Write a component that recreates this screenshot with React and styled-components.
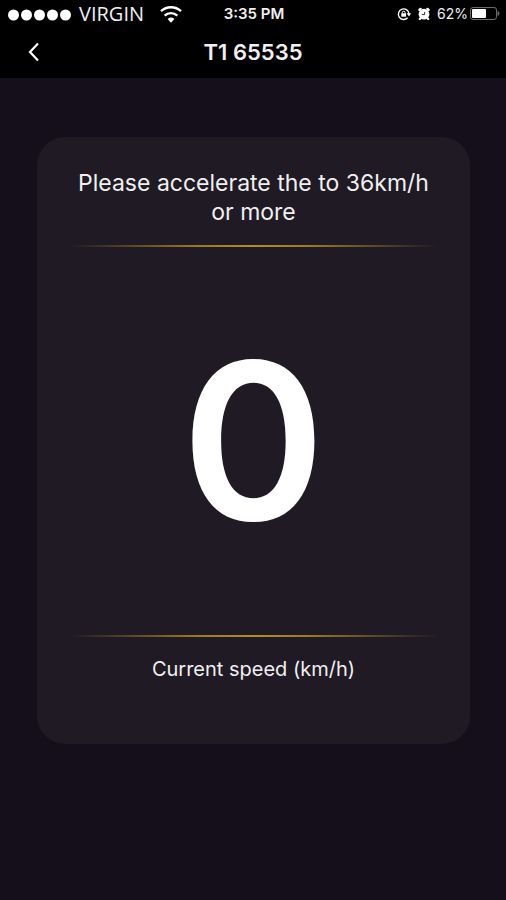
import React, { useState } from "react";
import styled, { createGlobalStyle } from "styled-components";

const GlobalStyle = createGlobalStyle`
  * {
    box-sizing: border-box;
  }
  body {
    margin: 0;
    background: #150f1b;
    color: #f1eff2;
    font-family: Inter, "Liberation Sans", sans-serif;
  }
`;

const Page = styled.div`
  min-height: 100vh;
  display: flex;
  flex-direction: column;
`;

const Header = styled.header`
  background: #000;
`;

const StatusBar = styled.div`
  display: grid;
  grid-template-columns: 1fr auto 1fr;
  align-items: center;
  height: 28px;
  padding: 0 6px 0 8px;
`;

const StatusGroup = styled.div`
  display: flex;
  align-items: center;
  justify-content: ${(props) => props.$align || "flex-start"};
`;

const Signal = styled.svg`
  width: 63px;
  height: 14px;
  margin-right: 8px;
  fill: #fff;
`;

const Carrier = styled.span`
  font-family: "Open Sans", "Noto Sans", sans-serif;
  font-size: 20px;
  line-height: 28px;
  margin-right: 16px;
`;

const StatusText = styled.span`
  font-size: ${(props) => (props.$strong ? 15 : 14)}px;
  font-weight: ${(props) => (props.$strong ? 600 : 400)};
  line-height: 28px;
`;

const StatusIcon = styled.svg`
  width: 14px;
  height: 14px;
  margin-right: 6px;
`;

const WifiIcon = styled.svg`
  width: 22px;
  height: 18px;
`;

const BatteryIcon = styled.svg`
  width: 30px;
  height: 14px;
  margin-left: 2px;
`;

const NavBar = styled.nav`
  display: grid;
  grid-template-columns: 68px 1fr 68px;
  align-items: center;
  height: 50px;
  padding-bottom: 2px;
`;

const BackButton = styled.button`
  display: flex;
  align-items: center;
  justify-content: center;
  height: 44px;
  padding: 0;
  border: 0;
  background: none;
  color: #fff;
  cursor: pointer;
`;

const Title = styled.h1`
  margin: 0;
  font-size: 22px;
  font-weight: 600;
  line-height: 28px;
  text-align: center;
`;

const Main = styled.main`
  padding: 59px 36px 59px 37px;
`;

const Card = styled.section`
  display: flex;
  flex-direction: column;
  padding: 32px 32px 60px;
  border-radius: 28px;
  background: #1f1a23;
  text-align: center;
`;

const Message = styled.p`
  margin: 0 0 18px;
  font-size: 23px;
  line-height: 29px;
`;

const Divider = styled.hr`
  width: 100%;
  height: 2px;
  margin: 0;
  border: 0;
  background: linear-gradient(
    to right,
    transparent,
    #9c7a25 35%,
    #b38d2c 50%,
    #9c7a25 65%,
    transparent
  );
`;

const Speed = styled.output`
  padding: 64px 0;
  color: #fff;
  font-size: 218px;
  font-weight: 600;
  line-height: 260px;
`;

const Caption = styled.p`
  margin: 18px 0 0;
  font-size: 20px;
  line-height: 29px;
`;

function SignalDots() {
  return (
    <Signal viewBox="0 0 63 14" aria-hidden="true">
      {[5.5, 18.5, 31.5, 44.5, 57.5].map((x) => (
        <circle key={x} cx={x} cy="8" r="5.5" />
      ))}
    </Signal>
  );
}

function Wifi() {
  return (
    <WifiIcon viewBox="0 0 22 18" fill="none" stroke="#fff" aria-hidden="true">
      <path d="M1 6.2a14.5 14.5 0 0 1 20 0" strokeWidth="2.4" />
      <path d="M4.7 10.6a9.2 9.2 0 0 1 12.6 0" strokeWidth="2.4" />
      <path d="M11 17.8 7.6 14a5.2 5.2 0 0 1 6.8 0z" fill="#fff" stroke="none" />
    </WifiIcon>
  );
}

function RotationLock() {
  return (
    <StatusIcon viewBox="0 0 14 14" fill="none" stroke="#fff" aria-hidden="true">
      <path d="M10.6 10.8A5.3 5.3 0 1 1 12 7" strokeWidth="1.4" />
      <path d="m9.6 6.2 2.4 3.2L14 6.2z" fill="#fff" stroke="none" />
      <path d="M5.3 6.8V5.6a1.4 1.4 0 0 1 2.8 0v1.2" />
      <path d="M4.3 6.3h4.8v3.4H4.3z" fill="#fff" stroke="none" />
    </StatusIcon>
  );
}

function Alarm() {
  return (
    <StatusIcon viewBox="0 0 14 14" aria-hidden="true">
      <g stroke="#fff" strokeWidth="2.4" strokeLinecap="round">
        <path d="M2.4 3 3.6 1.9M11.6 3l-1.2-1.1M2.8 12l1-1M11.2 12l-1-1" />
      </g>
      <circle cx="7" cy="7.2" r="5.4" fill="#fff" />
      <path d="M7.6 5v2.6H4.8" fill="none" stroke="#333" />
    </StatusIcon>
  );
}

function Battery() {
  return (
    <BatteryIcon viewBox="0 0 30 14" aria-hidden="true">
      <rect
        x="0.5"
        y="0.5"
        width="26"
        height="12"
        rx="2.5"
        fill="none"
        stroke="#6c6c6c"
      />
      <path d="M27.5 4c2.6.8 2.6 4.2 0 5z" fill="#6c6c6c" />
      <rect x="2" y="2" width="14" height="9" rx="1" fill="#fff" />
    </BatteryIcon>
  );
}

export default function App() {
  const [speed] = useState(0);

  return (
    <Page>
      <GlobalStyle />
      <Header>
        <StatusBar>
          <StatusGroup>
            <SignalDots />
            <Carrier>VIRGIN</Carrier>
            <Wifi />
          </StatusGroup>
          <StatusText $strong>3:35 PM</StatusText>
          <StatusGroup $align="flex-end">
            <RotationLock />
            <Alarm />
            <StatusText>62%</StatusText>
            <Battery />
          </StatusGroup>
        </StatusBar>
        <NavBar>
          <BackButton type="button" aria-label="Back">
            <svg width="12" height="20" viewBox="0 0 12 20" aria-hidden="true">
              <path
                d="M10 1.5 2 10l8 8.5"
                fill="none"
                stroke="currentColor"
                strokeWidth="2.2"
              />
            </svg>
          </BackButton>
          <Title>T1 65535</Title>
        </NavBar>
      </Header>
      <Main>
        <Card>
          <Message>Please accelerate the to 36km/h or more</Message>
          <Divider />
          <Speed aria-labelledby="speed-caption">{speed}</Speed>
          <Divider />
          <Caption id="speed-caption">Current speed (km/h)</Caption>
        </Card>
      </Main>
    </Page>
  );
}
